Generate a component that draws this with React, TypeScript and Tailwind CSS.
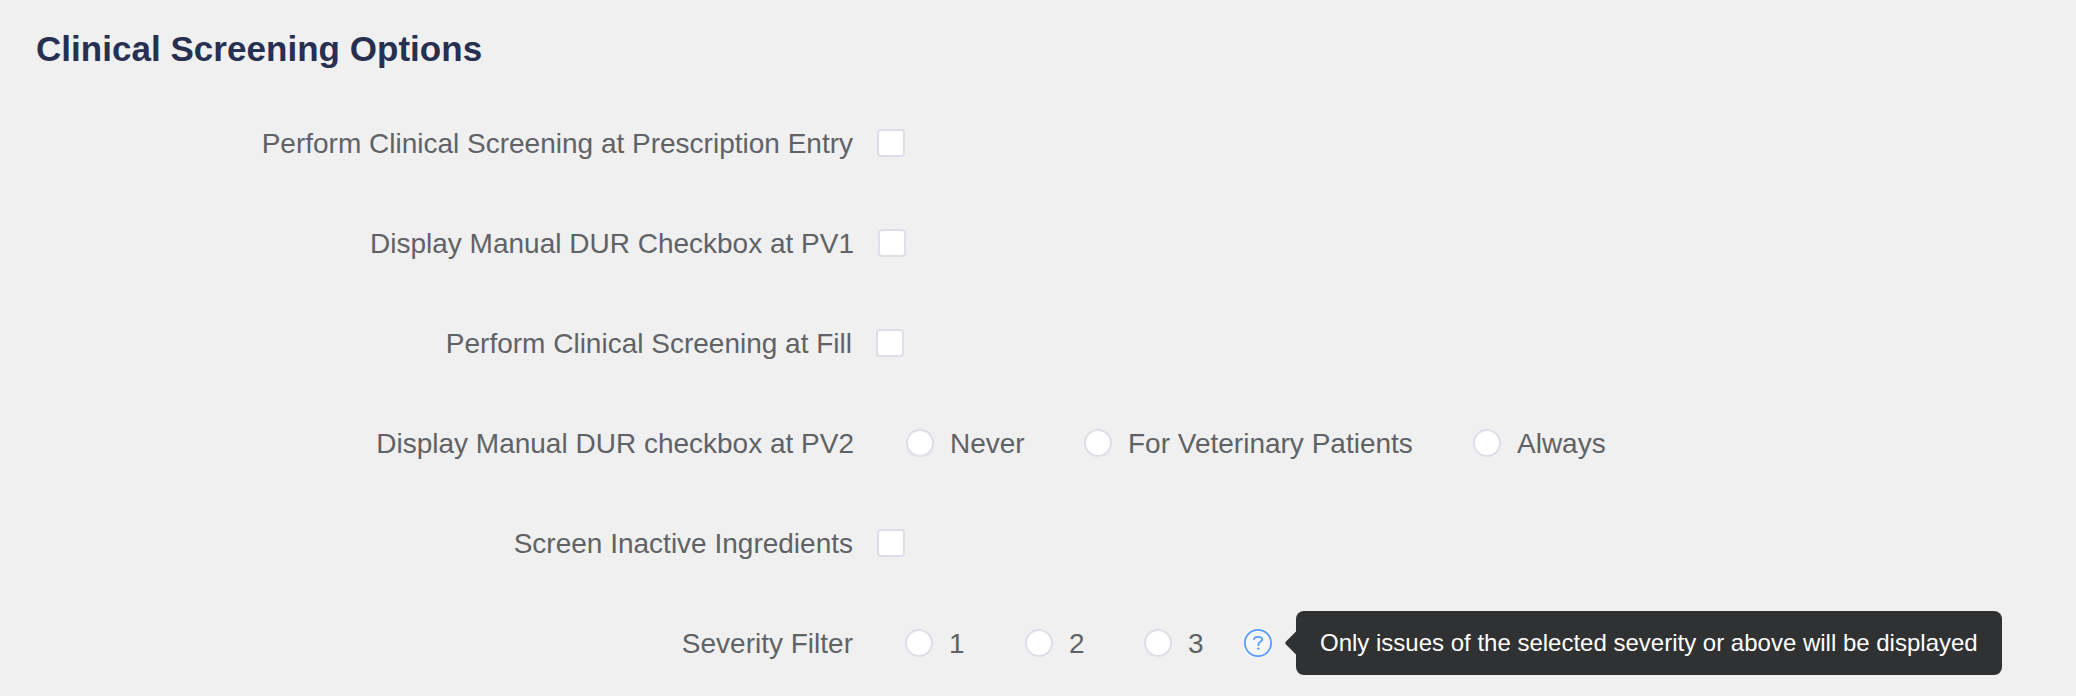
import type { ReactNode } from 'react';

function Row({ label, labelClass, children }: { label: string; labelClass: string; children: ReactNode }) {
  return (
    <div className="flex h-[100px] items-center">
      <div className={`shrink-0 whitespace-nowrap pt-px text-right ${labelClass}`}>{label}</div>
      {children}
    </div>
  );
}

function Checkbox() {
  return (
    <span
      role="checkbox"
      aria-checked="false"
      className="ml-6 size-7 shrink-0 rounded-[4px] border-2 border-[#dcdfe6] bg-white"
    />
  );
}

function Radio({ label, className }: { label: string; className: string }) {
  return (
    <div role="radio" aria-checked="false" className={`flex shrink-0 items-center gap-4 whitespace-nowrap ${className}`}>
      <span className="size-7 shrink-0 rounded-full border-2 border-[#dcdfe6] bg-white" />
      <span className="pt-px">{label}</span>
    </div>
  );
}

function HelpIcon() {
  return (
    <svg viewBox="0 0 28 28" className="size-7 shrink-0" fill="none">
      <rect width="28" height="28" rx="8" fill="#f5f7fb" />
      <circle cx="14" cy="14" r="13.1" stroke="#5a9cff" strokeWidth="1.8" />
      <path
        d="M9.9 10.8C9.9 8.7 11.4 7.8 14.1 7.8S18.3 8.8 18.3 10.6C18.3 12.6 14.4 13 14.4 15.2V17"
        stroke="#5a9cff"
        strokeWidth="1.8"
      />
      <circle cx="14.4" cy="19.6" r="1.2" fill="#5a9cff" />
    </svg>
  );
}

export default function App() {
  return (
    <main className="h-[696px] w-[2076px] overflow-hidden bg-[#f0f0f0] font-['Liberation_Sans',Arial,sans-serif] text-[28px] leading-10 text-[#606266]">
      <h2 className="h-[93px] pl-9 pt-[27px] text-[35px] font-bold leading-[43px] tracking-[0.03px] text-[#273050]">
        Clinical Screening Options
      </h2>
      <Row label="Perform Clinical Screening at Prescription Entry" labelClass="w-[853px]">
        <Checkbox />
      </Row>
      <Row label="Display Manual DUR Checkbox at PV1" labelClass="w-[854px]">
        <Checkbox />
      </Row>
      <Row label="Perform Clinical Screening at Fill" labelClass="w-[852px]">
        <Checkbox />
      </Row>
      <Row label="Display Manual DUR checkbox at PV2" labelClass="w-[854px]">
        <div role="radiogroup" className="flex pl-[52px]">
          <Radio label="Never" className="w-[178px]" />
          <Radio label="For Veterinary Patients" className="w-[389px]" />
          <Radio label="Always" className="w-[150px]" />
        </div>
      </Row>
      <Row label="Screen Inactive Ingredients" labelClass="w-[853px]">
        <Checkbox />
      </Row>
      <Row label="Severity Filter" labelClass="w-[853px]">
        <div role="radiogroup" className="flex pl-[52px]">
          <Radio label="1" className="w-[120px]" />
          <Radio label="2" className="w-[119px]" />
          <Radio label="3" className="w-[100px]" />
        </div>
        <HelpIcon />
        <div role="tooltip" className="ml-[13px] flex items-center">
          <svg viewBox="0 0 11 24" className="h-6 w-[11px] shrink-0" fill="#303133">
            <path d="M11 0.6L1 10.4Q-0.4 12 1 13.6L11 23.4Z" />
          </svg>
          <div className="flex h-16 w-[706px] items-center whitespace-nowrap rounded-lg bg-[#303133] pb-px pl-6 text-[24px] leading-[27px] text-white">
            Only issues of the selected severity or above will be displayed
          </div>
        </div>
      </Row>
    </main>
  );
}
